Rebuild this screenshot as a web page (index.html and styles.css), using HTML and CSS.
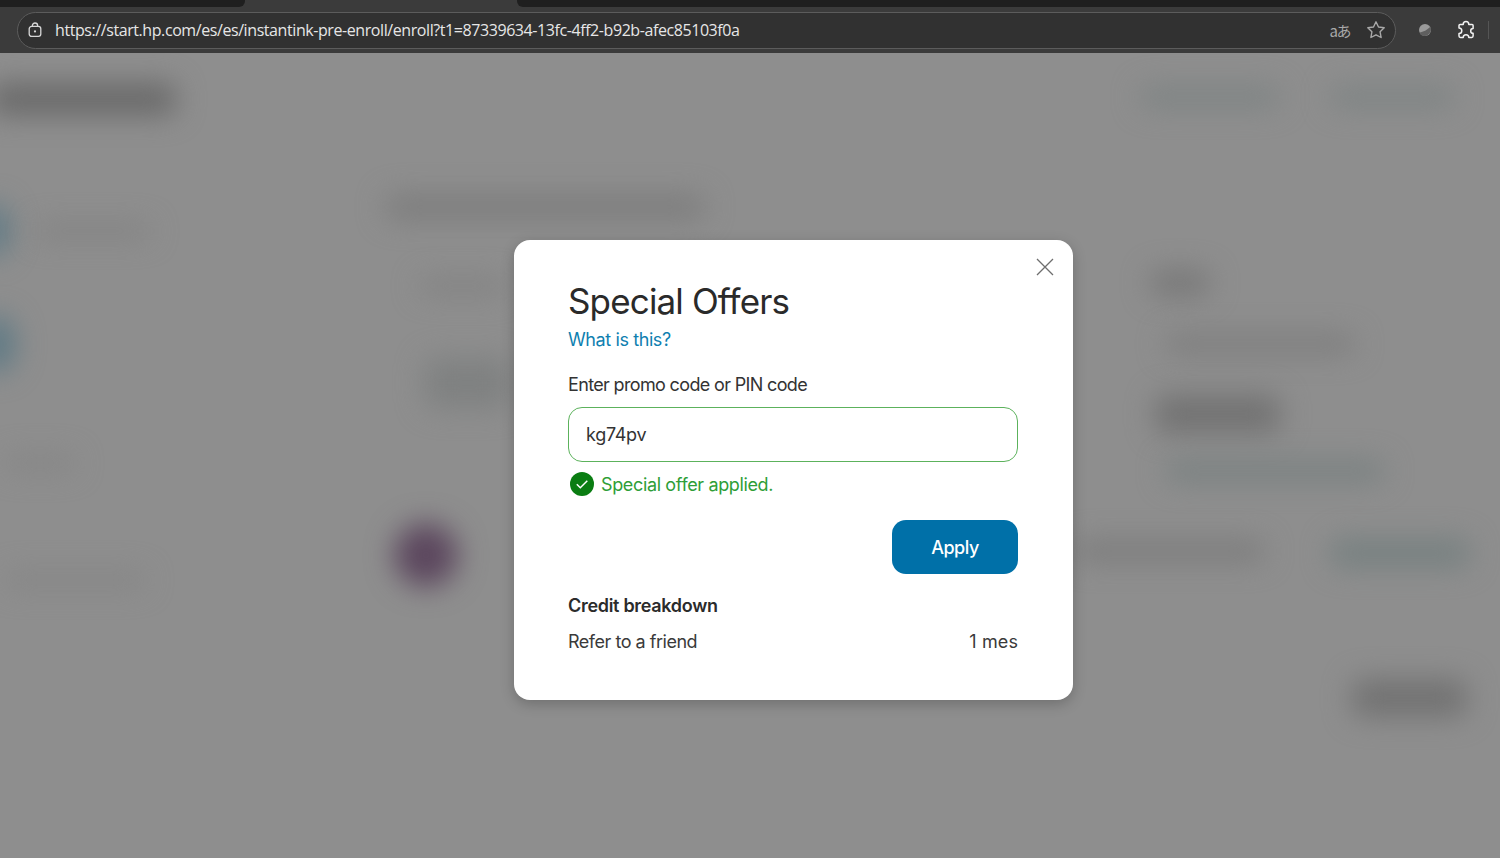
FILE: index.html
```html
<!DOCTYPE html>
<html lang="es">
<head>
  <meta charset="UTF-8">
  <title>Special Offers</title>
  <link rel="stylesheet" href="styles.css">
</head>
<body>

<header class="browser">
  <div class="tabstrip">
    <div class="tab-dark tab-left"></div>
    <div class="tab-dark tab-right"></div>
  </div>
  <div class="toolbar">
    <div class="urlbar">
      <svg class="lock" width="16" height="16" viewBox="0 0 16 16" fill="none" stroke="#d8d8d8" stroke-width="1.3">
        <rect x="2.2" y="4.4" width="11.6" height="10" rx="2.4"/>
        <path d="M5.4 4.4V3.6a2.6 2.6 0 0 1 5.2 0v.8"/>
        <circle cx="8" cy="9.4" r="1.1" fill="#d8d8d8" stroke="none"/>
      </svg>
      <span class="url">https://start.hp.com/es/es/instantink-pre-enroll/enroll?t1=87339634-13fc-4ff2-b92b-afec85103f0a</span>
      <span class="translate">aあ</span>
      <svg class="star" width="20" height="20" viewBox="0 0 20 20" fill="none" stroke="#a9a9a9" stroke-width="1.4" stroke-linejoin="round">
        <path d="M10 1.8l2.5 5.2 5.700.8-4.100 4 1 5.700-5.100-2.700-5.100 2.700 1-5.700-4.100-4 5.700-.8z"/>
      </svg>
    </div>
    <svg class="profile" width="14" height="14" viewBox="0 0 14 14">
      <circle cx="7" cy="7" r="6" fill="#9a9a9a"/>
      <path d="M1.400 9.400C4.500 9.600 9.500 7 12.400 3.600 13 5 13.200 6.500 12.800 8 11.600 11 9 13 6.500 13 4.200 13 2.400 11.600 1.400 9.400z" fill="#5f5f5f"/>
    </svg>
    <svg class="puzzle" width="20" height="20" viewBox="0 0 20 20" fill="none" stroke="#f2f2f2" stroke-width="1.5" stroke-linejoin="round">
      <path d="M7.200 4.400a2.800 2.800 0 0 1 5.600 0h3.300a1 1 0 0 1 1 1v3.100a2.400 2.400 0 0 0 0 4.800v2.800a1.400 1.400 0 0 1-1.400 1.400h-2.900a2.800 2.800 0 0 0-5.600 0H4.400A1.400 1.400 0 0 1 3 16.100v-2.600a2.800 2.800 0 0 0 0-5.600V5.400a1 1 0 0 1 1-1z"/>
    </svg>
    <div class="toolbar-sep"></div>
  </div>
</header>

<main class="page">
  <div class="backdrop">
    <div class="smudge logo"></div>
    <div class="smudge nav-a"></div>
    <div class="smudge nav-b"></div>
    <div class="smudge step-a"></div>
    <div class="smudge step-b"></div>
    <div class="smudge step-text"></div>
    <div class="smudge heading"></div>
    <div class="smudge sub-a"></div>
    <div class="smudge sub-b"></div>
    <div class="smudge side-a"></div>
    <div class="smudge side-b"></div>
    <div class="smudge avatar"></div>
    <div class="smudge sum-a"></div>
    <div class="smudge sum-b"></div>
    <div class="smudge sum-c"></div>
    <div class="smudge sum-d"></div>
    <div class="smudge row-a"></div>
    <div class="smudge row-b"></div>
    <div class="smudge next"></div>
  </div>

  <section class="dialog">
    <button class="close" aria-label="Close">
      <svg width="18" height="18" viewBox="0 0 18 18" stroke="#6e6e6e" stroke-width="1.3">
        <path d="M1 1l16 16M17 1L1 17"/>
      </svg>
    </button>
    <h1>Special Offers</h1>
    <a class="what" href="#">What is this?</a>
    <label class="field-label" for="promo">Enter promo code or PIN code</label>
    <input class="promo" id="promo" value="kg74pv">
    <div class="applied">
      <svg width="24" height="24" viewBox="0 0 24 24">
        <circle cx="12" cy="12" r="12" fill="#0a7d12"/>
        <path d="M6.800 12.300l3.500 3.500 7-7" fill="none" stroke="#fff" stroke-width="1.500"/>
      </svg>
      <span>Special offer applied.</span>
    </div>
    <div class="actions">
      <button class="apply">Apply</button>
    </div>
    <h2>Credit breakdown</h2>
    <div class="credit-row">
      <span>Refer to a friend</span>
      <span class="credit-value">1 mes</span>
    </div>
  </section>
</main>

</body>
</html>
```

FILE: styles.css
```css
* { box-sizing: border-box; }
html, body { height: 100%; }
body { margin: 0; font-family: "Inter", "Liberation Sans", sans-serif; background: #8e8e8e; overflow: hidden; display: flex; flex-direction: column; }

.browser { height: 53px; background: #3b3b3b; flex: none; }
.tabstrip { height: 7px; display: flex; justify-content: space-between; }
.tab-dark { background: #1f1f1f; height: 7px; }
.tab-left { width: 245px; border-bottom-right-radius: 6px; }
.tab-right { width: 983px; border-bottom-left-radius: 6px; }
.toolbar { display: flex; align-items: center; height: 46px; padding: 0 11px 0 17px; }
.urlbar { width: 1380px; height: 37px; border: 1.5px solid #5c5c5c; border-radius: 19px; background: #313131; display: flex; align-items: center; padding: 0 9px; }
.lock { flex: none; margin-right: 12px; }
.url { flex: 1; color: #e6e6e6; font-family: "Open Sans", sans-serif; font-size: 16px; letter-spacing: -0.42px; white-space: nowrap; }
.translate { color: #a9a9a9; font-family: "Noto Sans CJK JP", sans-serif; font-size: 15px; letter-spacing: -1.5px; margin-right: 16px; }
.star { flex: none; }
.profile { flex: none; margin-left: 22px; }
.puzzle { flex: none; margin-left: 24px; }
.toolbar-sep { width: 1px; height: 18px; background: #555; margin-left: 12px; }

.page { position: relative; flex: 1; padding: 187px 0 0 514px; overflow: hidden; }
.backdrop { position: absolute; inset: 0; overflow: hidden; }
.smudge { position: absolute; border-radius: 12px; background: #6b6b6b; filter: blur(14px); }
.logo { left: -10px; top: 30px; width: 186px; height: 32px; background: #696969; }
.nav-a { left: 1140px; top: 34px; width: 140px; height: 20px; background: #7d8383; }
.nav-b { left: 1330px; top: 34px; width: 125px; height: 20px; background: #7d8383; }
.step-a { left: -24px; top: 150px; width: 34px; height: 54px; background: #5f7a85; border-radius: 50%; }
.step-b { left: -24px; top: 262px; width: 40px; height: 58px; background: #5f7a85; border-radius: 50%; }
.step-text { left: 35px; top: 172px; width: 115px; height: 12px; background: #7f7f7f; }
.heading { left: 385px; top: 142px; width: 320px; height: 24px; background: #7c7c7c; }
.sub-a { left: 420px; top: 226px; width: 85px; height: 14px; background: #808080; }
.sub-b { left: 425px; top: 305px; width: 85px; height: 50px; background: #7f8181; }
.side-a { left: 5px; top: 403px; width: 70px; height: 14px; background: #848484; }
.side-b { left: 5px; top: 520px; width: 140px; height: 14px; background: #848484; }
.avatar { left: 394px; top: 470px; width: 64px; height: 64px; background: #5c475e; border-radius: 50%; }
.sum-a { left: 1150px; top: 218px; width: 60px; height: 24px; background: #767676; }
.sum-b { left: 1165px; top: 282px; width: 190px; height: 18px; background: #7c7c7c; }
.sum-c { left: 1155px; top: 342px; width: 125px; height: 38px; background: #727272; }
.sum-d { left: 1165px; top: 408px; width: 220px; height: 20px; background: #788080; }
.row-a { left: 1075px; top: 488px; width: 190px; height: 20px; background: #7b7b7b; }
.row-b { left: 1330px; top: 486px; width: 140px; height: 28px; background: #768080; }
.next { left: 1352px; top: 626px; width: 115px; height: 38px; background: #727272; }

.dialog { position: relative; width: 559px; height: 460px; padding: 40px 55px 0 54px; background: #fff; border-radius: 16px; box-shadow: 0 4px 14px rgba(0,0,0,0.22); color: #2b2b2b; }
.close { position: absolute; top: 18px; right: 19px; padding: 0; border: 0; background: none; height: 18px; }
h1 { margin: 0; font-size: 35px; font-weight: 400; line-height: 42px; letter-spacing: -0.85px; color: #2a2a2a; }
.what { display: block; margin-top: 6px; color: #0f7fb0; font-size: 18px; line-height: 24px; text-decoration: none; letter-spacing: -0.4px; }
.field-label { display: block; margin-top: 21px; font-size: 18px; line-height: 24px; letter-spacing: -0.65px; color: #333; }
.promo { display: block; width: 450px; height: 55px; margin-top: 10px; padding: 0 17px; border: 1px solid #5cb25c; border-radius: 14px; font-family: inherit; font-size: 18px; letter-spacing: -0.3px; color: #333; background: #fff; outline: none; }
.applied { display: flex; align-items: center; gap: 7px; margin-top: 10px; padding-left: 2px; height: 24px; color: #2e9e37; font-size: 18px; letter-spacing: -0.36px; }
.actions { display: flex; justify-content: flex-end; margin-top: 24px; }
.apply { width: 126px; height: 54px; border: 0; border-radius: 14px; background: #0070a8; color: #fff; font-family: inherit; font-size: 18px; font-weight: 500; letter-spacing: -0.5px; }
h2 { margin: 20px 0 0 0; font-size: 18px; font-weight: 600; line-height: 24px; letter-spacing: -0.3px; color: #2b2b2b; }
.credit-row { display: flex; justify-content: space-between; margin-top: 12px; font-size: 18px; line-height: 24px; letter-spacing: -0.48px; color: #3a3a3a; }
.credit-value { letter-spacing: 0.1px; }
```
